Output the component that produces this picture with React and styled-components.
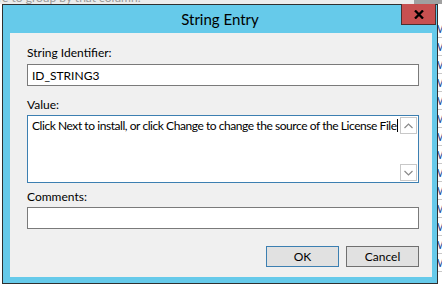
import React from "react";
import styled, { createGlobalStyle } from "styled-components";

const GlobalStyle = createGlobalStyle`
  html, body { margin: 0; padding: 0; }
  body {
    width: 442px;
    height: 285px;
    overflow: hidden;
    background: #f4f4f4;
    font-family: Lato, "Noto Sans", sans-serif;
  }
`;

const Desktop = styled.div`
  position: relative;
  width: 442px;
  height: 285px;
  overflow: hidden;
  background: #ffffff;
`;

const HintBar = styled.div`
  height: 12px;
  margin-top: -8px;
  background: #ececec;
  color: #9a9a9a;
  font-size: 12px;
  line-height: 12px;
  white-space: nowrap;
  display: flex;
  justify-content: space-between;
`;

const HintText = styled.span`
  margin-left: -2px;
`;

const HintDark = styled.span`
  width: 28px;
  background: #a0a0a0;
`;

const SideList = styled.div`
  position: absolute;
  right: 0;
  top: 20px;
  width: 5px;
  display: flex;
  flex-direction: column;
  overflow: hidden;
`;

const SideRow = styled.div`
  height: 17px;
  border-bottom: 1px solid #c8c8c8;
  color: #2a4f9c;
  font-size: 11px;
  line-height: 17px;
  overflow: hidden;
`;

const Window = styled.div`
  position: absolute;
  left: 2px;
  top: 4px;
  width: 434px;
  height: 278px;
  border: 1px solid #2f2f2f;
  background: #66caea;
  display: flex;
  flex-direction: column;
`;

const TitleBar = styled.div`
  position: relative;
  height: 28px;
  flex: none;
  display: flex;
  align-items: center;
  justify-content: center;
`;

const Title = styled.div`
  font-size: 15px;
  color: #000;
`;

const CloseButton = styled.div`
  position: absolute;
  right: 1px;
  top: -1px;
  width: 33px;
  height: 20px;
  background: #c75050;
  border: 1px solid #4b3030;
  border-top: none;
  display: flex;
  align-items: center;
  justify-content: center;
`;

const Client = styled.div`
  flex: 1;
  margin: 0 5px 6px 7px;
  background: #f0f0f0;
  padding: 12px 13px 0 17px;
  display: flex;
  flex-direction: column;
`;

const Label = styled.div`
  font-size: 12px;
  line-height: 15px;
  color: #000;
  margin-top: ${(p) => p.$gap || 0}px;
`;

const TextBox = styled.div`
  height: ${(p) => p.$h || 22}px;
  box-sizing: border-box;
  margin-top: ${(p) => p.$gap || 0}px;
  background: #fff;
  border: 1px solid ${(p) => (p.$focused ? "#3c7fb1" : "#7a7a7a")};
  font-size: 12px;
  line-height: 15px;
  color: #000;
  padding: 3px 4px;
  display: flex;
  white-space: nowrap;
`;

const MultiBox = styled(TextBox)`
  padding: 2px 1px 1px 4px;
  align-items: flex-start;
`;

const MultiText = styled.div`
  flex: 1;
  overflow: hidden;
  display: flex;
  align-items: flex-start;
  letter-spacing: -0.44px;
`;

const Caret = styled.span`
  display: inline-block;
  flex: none;
  width: 1px;
  height: 13px;
  margin-top: 1px;
  background: #000;
`;

const ScrollBar = styled.div`
  width: 17px;
  flex: none;
  align-self: stretch;
  margin-top: -1px;
  display: flex;
  flex-direction: column;
  justify-content: space-between;
`;

const ScrollButton = styled.div`
  height: 17px;
  box-sizing: border-box;
  border: 1px solid #c8c8c8;
  display: flex;
  align-items: center;
  justify-content: center;
`;

const ButtonRow = styled.div`
  margin-top: 17px;
  display: flex;
  justify-content: flex-end;
  gap: 7px;
`;

const Button = styled.div`
  width: 73px;
  height: 21px;
  box-sizing: border-box;
  background: #e1e1e1;
  border: 1px solid ${(p) => (p.$default ? "#3c7fb1" : "#707070")};
  font-size: 12px;
  color: #000;
  display: flex;
  align-items: center;
  justify-content: center;
`;

const Chevron = ({ up }) => (
  <svg width="9" height="6" viewBox="0 0 9 6">
    <path
      d={up ? "M0.5 5 L4.5 1 L8.5 5" : "M0.5 1 L4.5 5 L8.5 1"}
      fill="none"
      stroke="#8a8a8a"
      strokeWidth="1.2"
    />
  </svg>
);

const CloseGlyph = () => (
  <svg width="10" height="9" viewBox="0 0 10 9">
    <path d="M1 0.5 L9 8.5 M9 0.5 L1 8.5" stroke="#000" strokeWidth="2.3" />
  </svg>
);

export default function App() {
  return (
    <>
      <GlobalStyle />
      <Desktop>
        <HintBar>
          <HintText>re to group by that column.</HintText>
          <HintDark />
        </HintBar>
        <SideList>
          {Array.from({ length: 14 }).map((_, i) => (
            <SideRow key={i}>W</SideRow>
          ))}
        </SideList>
        <Window>
          <TitleBar>
            <Title>String Entry</Title>
            <CloseButton>
              <CloseGlyph />
            </CloseButton>
          </TitleBar>
          <Client>
            <Label>String Identifier:</Label>
            <TextBox $gap={4}>ID_STRING3</TextBox>
            <Label $gap={11}>Value:</Label>
            <MultiBox $gap={3} $h={68} $focused>
              <MultiText>
                Click Next to install, or click Change to change the source of the License File
                <Caret />
              </MultiText>
              <ScrollBar>
                <ScrollButton>
                  <Chevron up />
                </ScrollButton>
                <ScrollButton>
                  <Chevron />
                </ScrollButton>
              </ScrollBar>
            </MultiBox>
            <Label $gap={6}>Comments:</Label>
            <TextBox $gap={3} />
            <ButtonRow>
              <Button $default>OK</Button>
              <Button>Cancel</Button>
            </ButtonRow>
          </Client>
        </Window>
      </Desktop>
    </>
  );
}
